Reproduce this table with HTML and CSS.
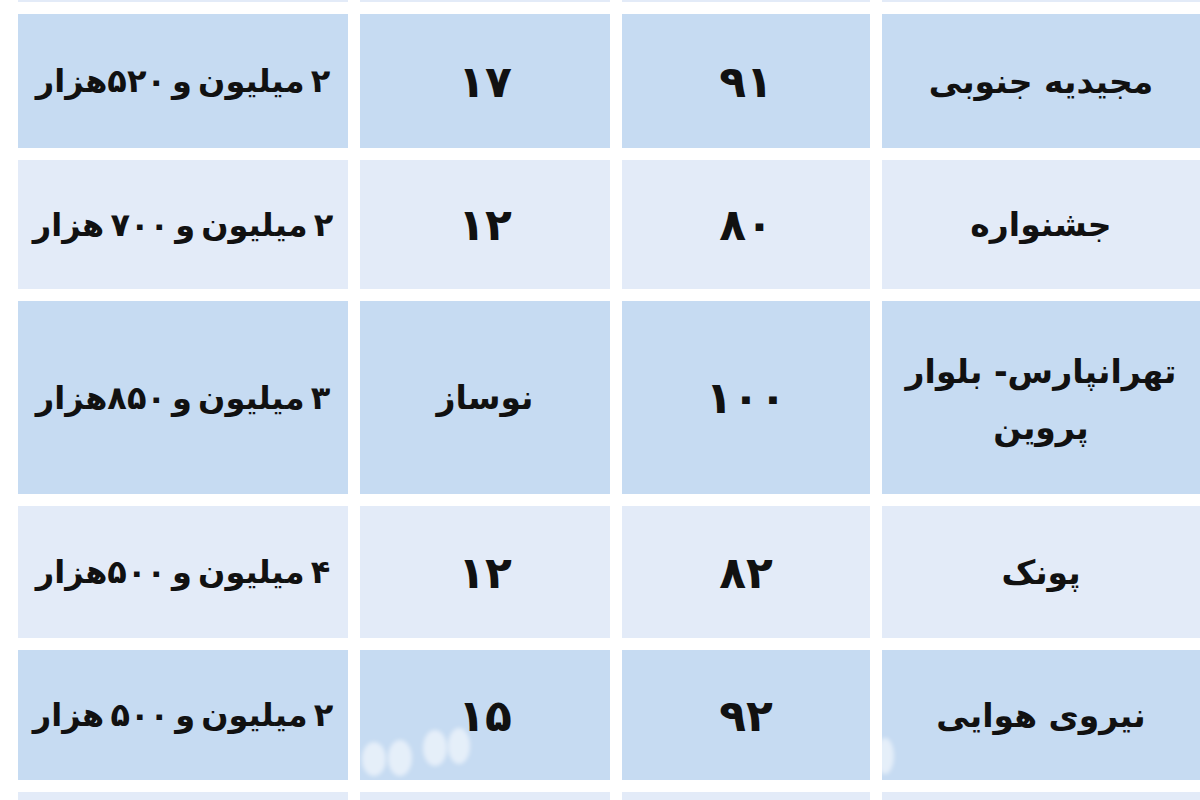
FILE: index.html
```html
<!DOCTYPE html>
<html lang="fa" dir="rtl">
<head>
<meta charset="utf-8">
<title>جدول</title>
<link rel="stylesheet" href="styles.css">
</head>
<body>
<div class="page">
  <div class="grid">
    <div class="cell light"></div><div class="cell light"></div><div class="cell light"></div><div class="cell light"></div>

    <div class="cell dark">مجیدیه جنوبی</div>
    <div class="cell dark num">۹۱</div>
    <div class="cell dark num">۱۷</div>
    <div class="cell dark price">۲ میلیون و ۵۲۰هزار</div>

    <div class="cell light">جشنواره</div>
    <div class="cell light num">۸۰</div>
    <div class="cell light num">۱۲</div>
    <div class="cell light price">۲ میلیون و ۷۰۰ هزار</div>

    <div class="cell dark two">تهرانپارس- بلوار<br>پروین</div>
    <div class="cell dark num">۱۰۰</div>
    <div class="cell dark">نوساز</div>
    <div class="cell dark price">۳ میلیون و ۸۵۰هزار</div>

    <div class="cell light">پونک</div>
    <div class="cell light num">۸۲</div>
    <div class="cell light num">۱۲</div>
    <div class="cell light price">۴ میلیون و ۵۰۰هزار</div>

    <div class="cell dark">نیروی هوایی</div>
    <div class="cell dark num">۹۲</div>
    <div class="cell dark num">۱۵</div>
    <div class="cell dark price">۲ میلیون و ۵۰۰ هزار</div>

    <div class="cell light"></div><div class="cell light"></div><div class="cell light"></div><div class="cell light"></div>
  </div>
  <div class="mark m1"></div>
  <div class="mark m2"></div>
  <div class="mark m3"></div>
  <div class="mark m4"></div>
  <div class="mark m5"></div>
</div>
</body>
</html>
```

FILE: styles.css
```css
html, body {
  margin: 0;
  padding: 0;
  background: #ffffff;
}
body {
  width: 1200px;
  height: 800px;
  overflow: hidden;
  font-family: "DejaVu Sans", "Noto Sans", sans-serif;
}
.page {
  position: relative;
  width: 1200px;
  height: 800px;
  overflow: hidden;
}
.grid {
  display: grid;
  direction: rtl;
  grid-template-columns: 318px 248px 250px 330px;
  grid-template-rows: 2px 134px 129px 193px 132px 130px 40px;
  column-gap: 12px;
  row-gap: 12px;
  margin-left: 18px;
}
.cell {
  display: flex;
  align-items: center;
  justify-content: center;
  text-align: center;
  font-weight: bold;
  font-size: 33px;
  color: #111111;
  white-space: nowrap;
}
.dark { background: #c6dbf2; }
.light { background: #e3ebf8; }
.num { font-size: 44px; }
.price { font-size: 32px; word-spacing: -5px; }
.two { line-height: 56px; white-space: normal; padding-top: 4px; }
.mark {
  position: absolute;
  background: rgba(255, 255, 255, 0.55);
  border-radius: 50%;
  filter: blur(2px);
}
.m1 { left: 362px; top: 742px; width: 24px; height: 34px; }
.m2 { left: 388px; top: 740px; width: 24px; height: 36px; }
.m3 { left: 423px; top: 730px; width: 24px; height: 36px; }
.m4 { left: 448px; top: 728px; width: 22px; height: 36px; }
.m5 { left: 876px; top: 738px; width: 18px; height: 36px; }
```
